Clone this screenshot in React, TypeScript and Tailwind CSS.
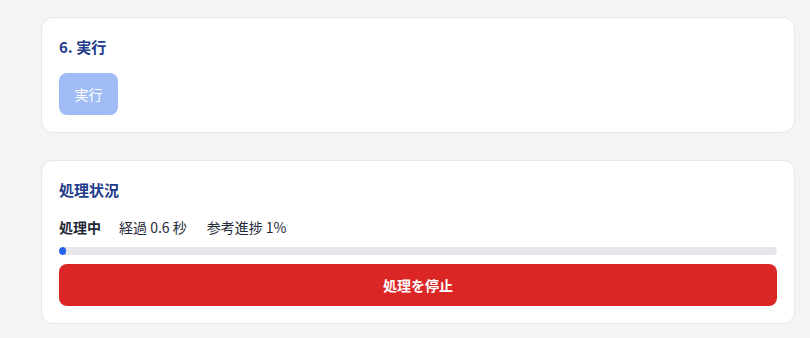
import React from 'react';

const font = { fontFamily: '"Noto Sans CJK JP", "Noto Sans", sans-serif' };

export default function App() {
  const progress = 1;

  return (
    <div className="min-h-[338px] bg-[#f3f4f6] pt-[17px] pl-[41px] pr-[15px]" style={font}>
      {/* 6. 実行 */}
      <div className="rounded-xl border border-[#e5e7eb] bg-white p-[17px]">
        <h2 className="text-[15px] font-bold leading-6 text-[#1e3a8a]">6. 実行</h2>
        <button
          disabled
          className="mt-[14px] h-[42px] w-[59px] rounded-lg bg-[#a0bbf5] text-[14px] text-white"
        >
          実行
        </button>
      </div>

      {/* 処理状況 */}
      <div className="mt-[27px] rounded-xl border border-[#e5e7eb] bg-white p-[17px]">
        <h2 className="text-[15px] font-bold leading-6 text-[#1e3a8a]">処理状況</h2>
        <div className="mt-[14px] flex items-center text-[14px] leading-[22px] text-[#1f2937]">
          <span className="mr-[18px] font-bold">処理中</span>
          <span className="mr-[20px]">経過 0.6 秒</span>
          <span>参考進捗 1%</span>
        </div>
        <div className="mt-[9px] h-[8px] w-full overflow-hidden rounded-full bg-[#e5e7eb]">
          <div className="h-full rounded-full bg-[#2563eb]" style={{ width: `${progress}%` }} />
        </div>
        <button className="mt-[9px] h-[42px] w-full rounded-lg bg-[#dc2626] text-[14px] font-bold text-white">
          処理を停止
        </button>
      </div>
    </div>
  );
}
